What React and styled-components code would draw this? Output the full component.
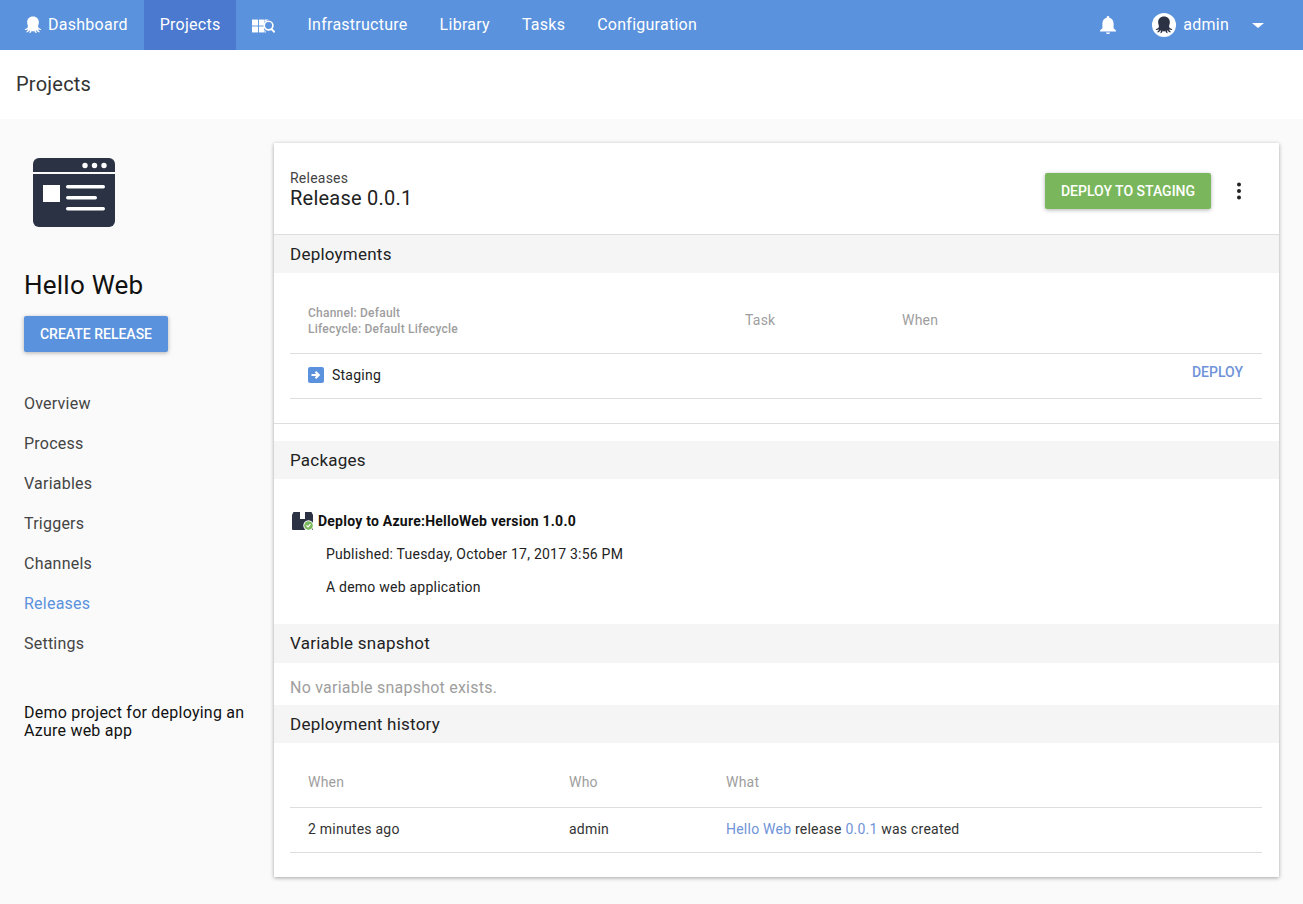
import React from "react";
import styled, { createGlobalStyle } from "styled-components";

const Global = createGlobalStyle`
  html, body { margin: 0; padding: 0; background: #fafafa; }
  body { font-family: Roboto, "Liberation Sans", sans-serif; color: #333; letter-spacing: 0.23px; }
  * { box-sizing: border-box; }
`;

const Page = styled.div`
  width: 1303px;
  height: 904px;
  overflow: hidden;
  background: #fafafa;
`;
const TopBar = styled.header`
  height: 50px;
  background: #5b92dd;
  display: flex;
  align-items: stretch;
  padding-left: 8px;
`;
const NavItem = styled.a`
  display: flex;
  align-items: center;
  gap: 6px;
  padding: 0 16px 1px;
  color: #fff;
  font-size: 16px;
  font-weight: 400;
  letter-spacing: 0.26px;
  background: ${(p) => (p.$active ? "#4a79cf" : "transparent")};
`;
const NavRight = styled.div`
  margin-left: auto;
  display: flex;
  align-items: center;
  color: #fff;
  font-size: 16px;
  padding-right: 39px;
  padding-bottom: 1px;
`;
const Bell = styled.span`
  display: flex;
  margin-right: 35px;
  padding-top: 1px;
`;
const Avatar = styled.span`
  width: 24px;
  height: 24px;
  border-radius: 50%;
  background: #fff;
  display: flex;
  align-items: center;
  justify-content: center;
  margin-right: 7px;
`;
const Caret = styled.span`
  width: 0;
  height: 0;
  margin-left: 23px;
  margin-top: 2px;
  border-left: 6px solid transparent;
  border-right: 6px solid transparent;
  border-top: 5px solid #fff;
`;
const TitleBar = styled.div`
  height: 69px;
  background: #fff;
  display: flex;
  align-items: center;
  padding: 0 0 1px 16px;
  font-size: 20px;
  color: #333;
`;
const Body = styled.div`
  display: flex;
  align-items: flex-start;
  padding: 24px 24px 0 24px;
`;
const Side = styled.aside`
  width: 250px;
  flex: none;
  padding-right: 24px;
`;
const LogoWrap = styled.div`
  display: flex;
  padding: 15px 0 0 9px;
  height: 126px;
`;
const ProjectName = styled.h1`
  margin: 0;
  font-size: 26px;
  line-height: 32px;
  font-weight: 400;
  color: #111;
`;
const CreateButton = styled.button`
  display: block;
  margin-top: 15px;
  width: 144px;
  height: 36px;
  border: 0;
  border-radius: 2px;
  background: #5b92dd;
  color: #fff;
  font: 500 14px Roboto, sans-serif;
  box-shadow: 0 1px 4px rgba(0, 0, 0, 0.3);
`;
const SideNav = styled.nav`
  margin-top: 31px;
  display: flex;
  flex-direction: column;
`;
const SideLink = styled.a`
  height: 40px;
  display: flex;
  align-items: center;
  font-size: 16px;
  color: ${(p) => (p.$active ? "#5b92dd" : "#444")};
`;
const SideDesc = styled.p`
  margin: 41px 0 0;
  font-size: 16px;
  line-height: 18px;
  color: #111;
`;
const Card = styled.main`
  width: 1005px;
  height: 734px;
  background: #fff;
  box-shadow: 0 1px 4px rgba(0, 0, 0, 0.35);
`;
const CardHead = styled.div`
  height: 92px;
  display: flex;
  align-items: center;
  padding: 0 28px 0 16px;
  border-bottom: 1px solid #dedede;
`;
const Crumbs = styled.div`
  flex: 1;
  padding-top: 2px;
`;
const Crumb = styled.div`
  font-size: 14px;
  line-height: 16px;
  color: #444;
`;
const ReleaseTitle = styled.div`
  font-size: 20px;
  line-height: 24px;
  color: #222;
`;
const DeployButton = styled.button`
  width: 166px;
  height: 36px;
  margin-top: 4px;
  border: 0;
  border-radius: 2px;
  background: #7ab75c;
  color: #fff;
  font: 500 14px Roboto, sans-serif;
  box-shadow: 0 1px 4px rgba(0, 0, 0, 0.3);
`;
const More = styled.span`
  display: flex;
  margin: 4px 0 0 16px;
`;
const SectionHead = styled.div`
  height: ${(p) => p.$h || 38}px;
  background: #f5f5f5;
  display: flex;
  align-items: center;
  padding: 0 0 ${(p) => p.$pb || 0}px 16px;
  font-size: 17px;
  color: #222;
`;
const TableWrap = styled.div`
  padding: 16px 17px 0 16px;
`;
const Row = styled.div`
  display: grid;
  grid-template-columns: ${(p) => p.$cols};
  align-items: center;
  height: ${(p) => p.$h}px;
  padding: 0 0 ${(p) => p.$pb || 0}px 18px;
  border-bottom: 1px solid #dedede;
  font-size: 14px;
  color: #333;
`;
const HeadCell = styled.div`
  color: #9e9e9e;
  font-size: 14px;
  margin-bottom: 2px;
`;
const ChannelCell = styled.div`
  color: #9e9e9e;
  font-size: 12px;
  font-weight: 500;
  line-height: 16px;
`;
const EnvCell = styled.div`
  display: flex;
  align-items: center;
  gap: 8px;
  color: #222;
`;
const EnvIcon = styled.span`
  width: 16px;
  height: 16px;
  border-radius: 2px;
  background: #5b92dd;
  display: flex;
  align-items: center;
  justify-content: center;
`;
const DeployLink = styled.a`
  justify-self: end;
  align-self: start;
  margin: 10px 19px 0 0;
  color: #6f93d8;
  font-size: 14px;
  font-weight: 500;
  letter-spacing: 0;
`;
const Rule = styled.div`
  margin-top: 24px;
  margin-bottom: 17px;
  height: 1px;
  background: #dedede;
`;
const PackageBlock = styled.div`
  padding: 30px 16px 0 17px;
  height: 145px;
  font-size: 14px;
  color: #222;
`;
const PackageTitle = styled.div`
  display: flex;
  align-items: center;
  gap: 3px;
  height: 24px;
  margin-bottom: 11px;
  font-weight: 700;
  color: #111;
`;
const PackageLine = styled.div`
  height: 20px;
  margin-bottom: 13px;
  padding-left: 35px;
  line-height: 20px;
`;
const Empty = styled.div`
  height: 42px;
  padding: 15px 0 0 16px;
  font-size: 16px;
  line-height: 20px;
  color: #9e9e9e;
`;
const Link = styled.a`
  color: #6f93d8;
`;

const Octopus = ({ size, color }) => (
  <svg width={size} height={size} viewBox="0 0 24 24" fill={color}>
    <path d="M12 .8C7 .8 4.200 4.200 4.200 8.400c0 2.500 1 4 1 5.600 0 1.700-1.500 2.700-3.500 3.300-.9.300-.8 1.200.1 1.300 1.300.1 2.500-.3 3.500-.9-.2 1.300-1 2.400-2 3.100-.6.500-.2 1.200.6 1.100 1.700-.2 3-1.700 3.700-3.100.4 1.200.2 2.400-.3 3.300-.3.700.3 1.100 1 .7 1.200-.8 1.900-2.300 2-3.500.5.900.9 1.400 1.700 1.400s1.200-.5 1.700-1.400c.1 1.200.8 2.700 2 3.500.7.400 1.300 0 1-.7-.5-.9-.7-2.100-.3-3.300.7 1.400 2 2.900 3.700 3.100.8.100 1.200-.6.600-1.100-1-.7-1.800-1.800-2-3.100 1 .6 2.200 1 3.500.9.900-.1 1-1 .1-1.300-2-.6-3.500-1.600-3.500-3.300 0-1.600 1-3.100 1-5.600C19.800 4.200 17 .8 12 .8z" />
  </svg>
);

const BoardSearch = () => (
  <svg width="23" height="16" viewBox="0 0 25 16" fill="#fff" style={{ marginTop: 2 }}>
    <rect x="0" y="1" width="6.500" height="6.500" />
    <rect x="7.500" y="1" width="5.500" height="6.500" />
    <rect x="0" y="8.500" width="6.500" height="6.500" />
    <rect x="7.500" y="8.500" width="5.500" height="6.500" />
    <path d="M13.500 1H18l-3.500 2-1 2z" />
    <path d="M13.500 11.500l1 2 .8 1.500h-1.800z" />
    <circle cx="18" cy="7.500" r="4.700" fill="none" stroke="#fff" strokeWidth="1.800" />
    <path d="M21 11l3.600 3.800" stroke="#fff" strokeWidth="2" />
  </svg>
);

const BellIcon = () => (
  <svg width="18" height="20" viewBox="0 0 18 20" fill="#fff">
    <path d="M9 1c-.8 0-1.300.6-1.300 1.300v.5C5 3.500 3.400 5.800 3.400 8.600v4.600L1 15.400v1h16v-1l-2.400-2.200V8.600c0-2.800-1.600-5.100-4.300-5.800v-.5C10.300 1.600 9.800 1 9 1z" />
    <path d="M7 17.400h4c0 1-.9 1.700-2 1.700s-2-.7-2-1.700z" />
  </svg>
);

const ProjectLogo = () => (
  <svg width="82" height="69" viewBox="0 0 82 69">
    <path d="M6 0h70a6 6 0 0 1 6 6v8H0V6a6 6 0 0 1 6-6z" fill="#2a3244" />
    <path d="M0 16h82v47a6 6 0 0 1-6 6H6a6 6 0 0 1-6-6z" fill="#2a3244" />
    <circle cx="52" cy="7.500" r="2.700" fill="#fff" />
    <circle cx="61.500" cy="7.500" r="2.700" fill="#fff" />
    <circle cx="71" cy="7.500" r="2.700" fill="#fff" />
    <rect x="10" y="27" width="17" height="17" fill="#fff" />
    <rect x="33" y="27" width="39" height="3.500" rx="1.700" fill="#fff" />
    <rect x="33" y="38" width="31" height="3.500" rx="1.700" fill="#fff" />
    <rect x="33" y="49" width="39" height="3.500" rx="1.700" fill="#fff" />
  </svg>
);

const PackageIcon = () => (
  <svg width="24" height="20" viewBox="0 0 24 20">
    <path d="M1 4 2.500 1H9v7h5V1h6.500L22 4v14a1 1 0 0 1-1 1H2a1 1 0 0 1-1-1z" fill="#2a3244" />
    <circle cx="17.500" cy="14.500" r="5.200" fill="#fff" />
    <circle cx="17.500" cy="14.500" r="4.300" fill="#7ab75c" />
    <path d="M15.500 14.500l1.500 1.500 2.500-2.800" stroke="#fff" strokeWidth="1.200" fill="none" />
  </svg>
);

const Dots = () => (
  <svg width="24" height="24" viewBox="0 0 24 24" fill="#222">
    <circle cx="12" cy="5.500" r="2" />
    <circle cx="12" cy="12" r="2" />
    <circle cx="12" cy="18.500" r="2" />
  </svg>
);

const ArrowIcon = () => (
  <svg width="12" height="12" viewBox="0 0 12 12" fill="none" stroke="#fff" strokeWidth="2.200">
    <path d="M1.500 6h7M5.500 2.800 8.700 6 5.500 9.200" />
  </svg>
);

export default function App() {
  const sideLinks = ["Overview", "Process", "Variables", "Triggers", "Channels", "Releases", "Settings"];
  return (
    <Page>
      <Global />
      <TopBar>
        <NavItem>
          <Octopus size={18} color="#fff" />
          Dashboard
        </NavItem>
        <NavItem $active>Projects</NavItem>
        <NavItem>
          <BoardSearch />
        </NavItem>
        <NavItem>Infrastructure</NavItem>
        <NavItem>Library</NavItem>
        <NavItem>Tasks</NavItem>
        <NavItem>Configuration</NavItem>
        <NavRight>
          <Bell>
            <BellIcon />
          </Bell>
          <Avatar>
            <Octopus size={18} color="#2a3244" />
          </Avatar>
          admin
          <Caret />
        </NavRight>
      </TopBar>
      <TitleBar>Projects</TitleBar>
      <Body>
        <Side>
          <LogoWrap>
            <ProjectLogo />
          </LogoWrap>
          <ProjectName>Hello Web</ProjectName>
          <CreateButton>CREATE RELEASE</CreateButton>
          <SideNav>
            {sideLinks.map((l) => (
              <SideLink key={l} $active={l === "Releases"}>
                {l}
              </SideLink>
            ))}
          </SideNav>
          <SideDesc>Demo project for deploying an Azure web app</SideDesc>
        </Side>
        <Card>
          <CardHead>
            <Crumbs>
              <Crumb>Releases</Crumb>
              <ReleaseTitle>Release 0.0.1</ReleaseTitle>
            </Crumbs>
            <DeployButton>DEPLOY TO STAGING</DeployButton>
            <More>
              <Dots />
            </More>
          </CardHead>
          <SectionHead>Deployments</SectionHead>
          <TableWrap>
            <Row $cols="437px 157px 1fr" $h={65}>
              <ChannelCell>
                Channel: Default
                <br />
                Lifecycle: Default Lifecycle
              </ChannelCell>
              <HeadCell>Task</HeadCell>
              <HeadCell>When</HeadCell>
            </Row>
            <Row $cols="1fr auto" $h={45} $pb={2}>
              <EnvCell>
                <EnvIcon>
                  <ArrowIcon />
                </EnvIcon>
                Staging
              </EnvCell>
              <DeployLink>DEPLOY</DeployLink>
            </Row>
          </TableWrap>
          <Rule />
          <SectionHead>Packages</SectionHead>
          <PackageBlock>
            <PackageTitle>
              <PackageIcon />
              Deploy to Azure:HelloWeb version 1.0.0
            </PackageTitle>
            <PackageLine>Published: Tuesday, October 17, 2017 3:56 PM</PackageLine>
            <PackageLine>A demo web application</PackageLine>
          </PackageBlock>
          <SectionHead $h={39} $pb={2}>Variable snapshot</SectionHead>
          <Empty>No variable snapshot exists.</Empty>
          <SectionHead>Deployment history</SectionHead>
          <TableWrap>
            <Row $cols="261px 157px 1fr" $h={49}>
              <HeadCell>When</HeadCell>
              <HeadCell>Who</HeadCell>
              <HeadCell>What</HeadCell>
            </Row>
            <Row $cols="261px 157px 1fr" $h={45} $pb={2}>
              <div>2 minutes ago</div>
              <div>admin</div>
              <div>
                <Link>Hello Web</Link> release <Link>0.0.1</Link> was created
              </div>
            </Row>
          </TableWrap>
        </Card>
      </Body>
    </Page>
  );
}
